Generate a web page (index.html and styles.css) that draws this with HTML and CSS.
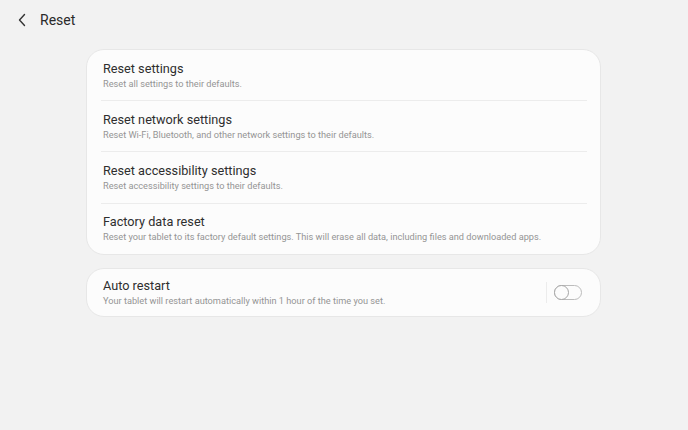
FILE: index.html
```html
<!DOCTYPE html>
<html>
<head>
<meta charset="utf-8">
<link rel="stylesheet" href="styles.css">
</head>
<body>
<header class="topbar">
  <svg class="back" width="10" height="14" viewBox="0 0 10 14"><path d="M7.5 1.5 L2.5 7 L7.5 12.5" fill="none" stroke="#333" stroke-width="1.4" stroke-linecap="round" stroke-linejoin="round"/></svg>
  <h1 class="title">Reset</h1>
</header>
<main class="content">
  <section class="card">
    <div class="row">
      <div class="row-title">Reset settings</div>
      <div class="row-sub">Reset all settings to their defaults.</div>
    </div>
    <div class="divider"></div>
    <div class="row">
      <div class="row-title">Reset network settings</div>
      <div class="row-sub">Reset Wi-Fi, Bluetooth, and other network settings to their defaults.</div>
    </div>
    <div class="divider"></div>
    <div class="row">
      <div class="row-title">Reset accessibility settings</div>
      <div class="row-sub">Reset accessibility settings to their defaults.</div>
    </div>
    <div class="divider"></div>
    <div class="row">
      <div class="row-title">Factory data reset</div>
      <div class="row-sub">Reset your tablet to its factory default settings. This will erase all data, including files and downloaded apps.</div>
    </div>
  </section>
  <section class="card">
    <div class="row row-switch">
      <div class="row-text">
        <div class="row-title">Auto restart</div>
        <div class="row-sub">Your tablet will restart automatically within 1 hour of the time you set.</div>
      </div>
      <div class="vsep"></div>
      <div class="switch"><div class="knob"></div></div>
    </div>
  </section>
</main>
</body>
</html>
```
FILE: styles.css
```css
html, body {
  margin: 0;
  padding: 0;
}
body {
  background: #f2f2f2;
  font-family: Roboto, "Noto Sans", sans-serif;
  color: #222;
  width: 688px;
  height: 430px;
}
.topbar {
  display: flex;
  align-items: center;
  height: 40px;
  padding-left: 17px;
  box-sizing: border-box;
}
.back {
  display: block;
  margin-right: 13px;
}
.title {
  margin: 0;
  font-weight: 400;
  font-size: 14px;
  color: #2a2a2a;
}
.content {
  padding: 9px 0 0 86px;
  width: 515px;
  display: flex;
  flex-direction: column;
  gap: 13px;
}
.card {
  background: #fcfcfc;
  border: 1px solid #e7e7e7;
  border-radius: 18px;
  display: flex;
  flex-direction: column;
}
.row {
  height: 50.2px;
  padding-left: 16px;
  padding-right: 16px;
  display: flex;
  flex-direction: column;
  justify-content: center;
  box-sizing: border-box;
}
.row-title {
  font-size: 12.7px;
  line-height: 16px;
  color: #2e2e2e;
}
.row-sub {
  font-size: 9.2px;
  line-height: 12px;
  color: #959595;
  margin-top: 1px;
}
.divider {
  height: 1px;
  background: #ececec;
  margin: 0 13px 0 14px;
}
.row-switch {
  flex-direction: row;
  align-items: center;
  justify-content: flex-start;
  height: 47px;
}
.row-text {
  flex: 1;
  display: flex;
  flex-direction: column;
}
.vsep {
  width: 1px;
  height: 21px;
  background: #ececec;
  margin-right: 7px;
}
.switch {
  position: relative;
  width: 26px;
  height: 13px;
  border: 1.2px solid #bcbcbc;
  border-radius: 8px;
  margin-right: 2px;
}
.knob {
  position: absolute;
  left: -1.2px;
  top: -1.2px;
  width: 13px;
  height: 13px;
  border: 1.2px solid #a5a5a5;
  border-radius: 50%;
  background: #fcfcfc;
}
```
